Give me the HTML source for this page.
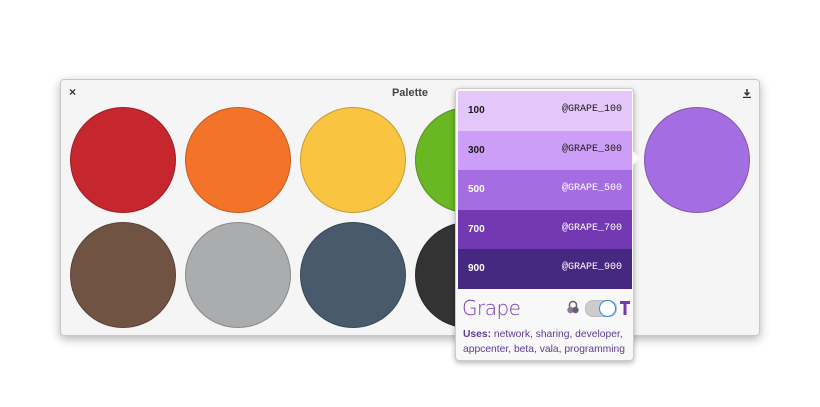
<!DOCTYPE html>
<html><head><style>
body{margin:0;width:820px;height:407px;background:#fff;position:relative;overflow:hidden;font-family:"Liberation Sans",sans-serif}
.win{position:absolute;left:60px;top:79px;width:700px;height:257px;background:#f5f5f5;border:1px solid #c8c8c8;border-radius:4px;box-shadow:0 3px 10px rgba(0,0,0,.3);box-sizing:border-box}
.title{position:absolute;left:0;right:0;top:7px;text-align:center;font-size:11px;font-weight:bold;color:#444}
.c{position:absolute;width:104px;height:104px;border-radius:50%;border:1px solid rgba(0,0,0,.2)}
.pop{position:absolute;left:455px;top:88px;width:179px;height:273px;background:#f8f8f8;border:1px solid #ccc;border-radius:4px;box-shadow:0 2px 6px rgba(0,0,0,.3);box-sizing:border-box}
.row{position:absolute;left:2px;width:174px;height:40px;font-size:10px;font-weight:bold}
.row b{position:absolute;left:10px;top:14px}
.row span{position:absolute;right:10px;top:13px;font-family:"Liberation Mono",monospace;font-weight:normal;font-size:10px}
</style></head><body>
<div class="win">
<div style="position:absolute;left:8px;top:5px;font-size:12px;font-weight:bold;color:#333">×</div>
<div class="title">Palette</div>
<svg style="position:absolute;right:8px;top:9px" width="8" height="9"><path d="M4 0v6M1.5 3.5L4 6 6.5 3.5M0 8.5h8" stroke="#333" stroke-width="1.5" fill="none"/></svg>
<div class="c" style="left:9px;top:27px;background:#c6262e"></div>
<div class="c" style="left:124px;top:27px;background:#f37329"></div>
<div class="c" style="left:239px;top:27px;background:#f9c440"></div>
<div class="c" style="left:354px;top:27px;background:#68b723"></div>
<div class="c" style="left:583px;top:27px;background:#a56de2"></div>
<div class="c" style="left:9px;top:142px;background:#715344"></div>
<div class="c" style="left:124px;top:142px;background:#abacae"></div>
<div class="c" style="left:239px;top:142px;background:#485a6c"></div>
<div class="c" style="left:354px;top:142px;background:#333"></div>
</div>
<div class="pop">
<div style="position:absolute;right:-7px;top:62px;width:0;height:0;border:7px solid transparent;border-left-color:#f8f8f8;border-right:0"></div>
<div class="row" style="top:2px;background:#e4c6fa;color:#1a1a1a"><b>100</b><span>@GRAPE_100</span></div>
<div class="row" style="top:42px;background:#cd9ef7;color:#1a1a1a"><b>300</b><span>@GRAPE_300</span></div>
<div class="row" style="top:81px;background:#a56de2;color:#fff"><b>500</b><span>@GRAPE_500</span></div>
<div class="row" style="top:121px;background:#7239b3;color:#fff"><b>700</b><span>@GRAPE_700</span></div>
<div class="row" style="top:160px;background:#452981;color:#fff"><b>900</b><span>@GRAPE_900</span></div>
<div style="position:absolute;left:6px;top:207px;font-size:20px;color:#7239b3;font-family:'DejaVu Sans',sans-serif;font-weight:200;letter-spacing:-0.5px">Grape</div>
<div style="position:absolute;left:110px;top:211px;width:14px;height:14px"><svg width="14" height="14"><path d="M3.5 7V5a3.5 3.5 0 0 1 7 0v2" stroke="#666" fill="none" stroke-width="1.5"/><circle cx="4.5" cy="10" r="3.2" fill="#8a7a9a"/><circle cx="9.5" cy="10" r="3.2" fill="#6a5a7a"/></svg></div>
<div style="position:absolute;left:129px;top:211px;width:30px;height:15px;border-radius:8px;background:#ccc;border:1px solid #bbb"></div>
<div style="position:absolute;left:143px;top:211px;width:15px;height:15px;border-radius:50%;background:#fff;border:1px solid #3689e6"></div>
<svg style="position:absolute;left:164px;top:211px" width="10" height="15"><path d="M0 1h10v3H0zM3.5 4h3v11h-3z" fill="#7239b3"/></svg>
<div style="position:absolute;left:7px;top:238px;width:172px;font-size:10.3px;line-height:15px;color:#5d3b99"><b>Uses:</b> network, sharing, developer, appcenter, beta, vala, programming</div>
</div>
</body></html>
